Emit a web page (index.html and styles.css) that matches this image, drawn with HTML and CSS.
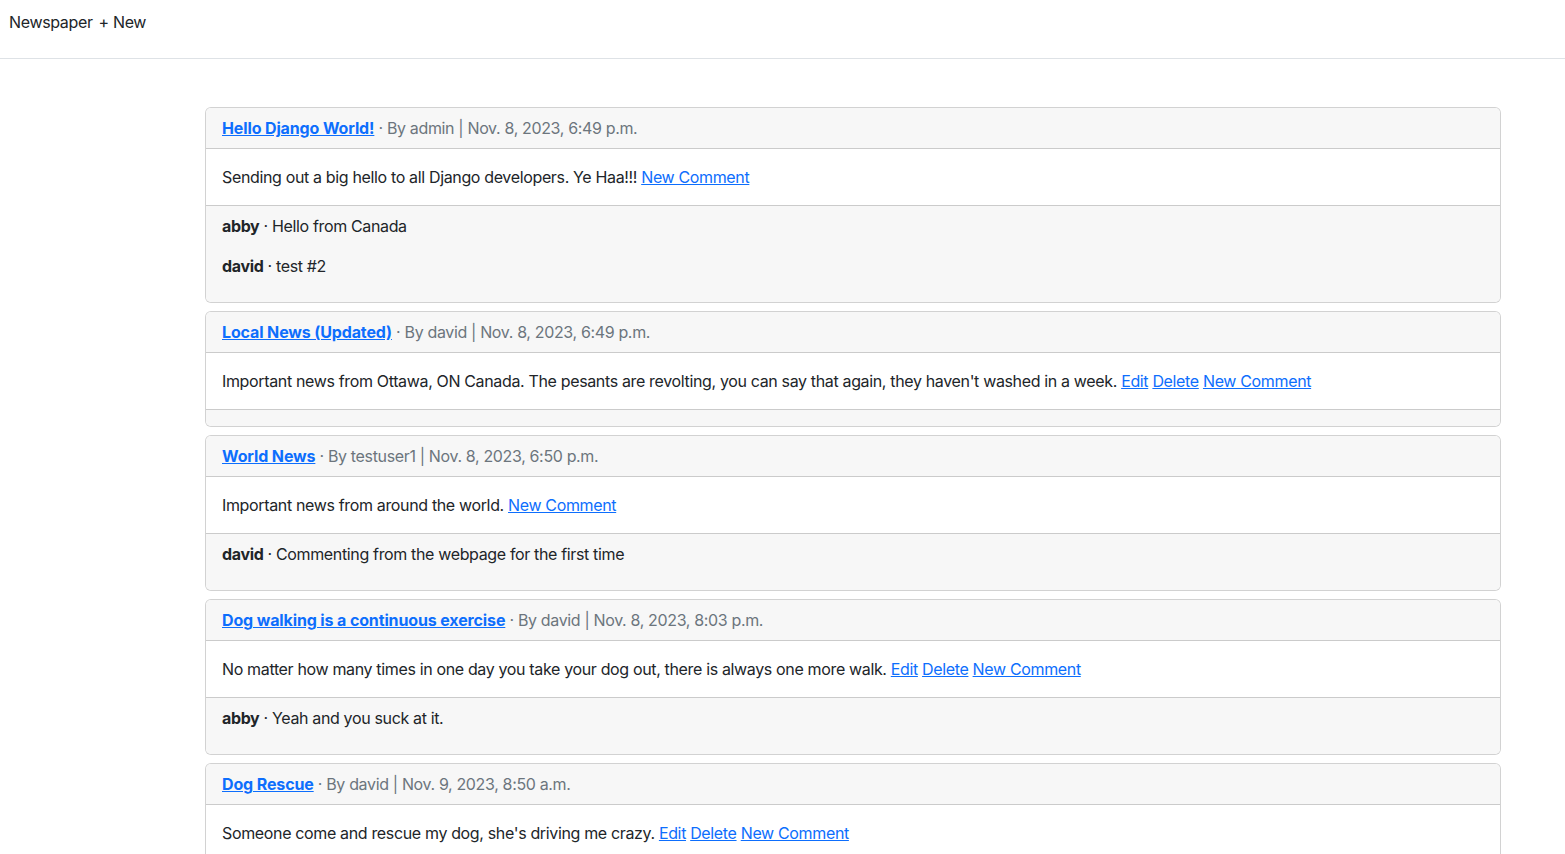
FILE: index.html
```html
<!DOCTYPE html>
<html lang="en">
<head>
<meta charset="utf-8">
<title>Newspaper</title>
<link rel="stylesheet" href="styles.css">
</head>
<body>
<nav class="topnav">
  <a class="brand" href="#">Newspaper</a>
  <a class="nav-link" href="#">+ New</a>
</nav>
<main class="main">
  <div class="card">
    <div class="card-header"><a class="title" href="#">Hello Django World!</a> <span class="meta">&middot; By admin | Nov. 8, 2023, 6:49 p.m.</span></div>
    <div class="card-body">Sending out a big hello to all Django developers. Ye Haa!!! <a href="#">New Comment</a></div>
    <div class="card-footer">
      <p><strong>abby</strong> &middot; Hello from Canada</p>
      <p><strong>david</strong> &middot; test #2</p>
    </div>
  </div>
  <div class="card">
    <div class="card-header"><a class="title" href="#">Local News (Updated)</a> <span class="meta">&middot; By david | Nov. 8, 2023, 6:49 p.m.</span></div>
    <div class="card-body">Important news from Ottawa, ON Canada. The pesants are revolting, you can say that again, they haven't washed in a week. <a href="#">Edit</a> <a href="#">Delete</a> <a href="#">New Comment</a></div>
    <div class="card-footer"></div>
  </div>
  <div class="card">
    <div class="card-header"><a class="title" href="#">World News</a> <span class="meta">&middot; By testuser1 | Nov. 8, 2023, 6:50 p.m.</span></div>
    <div class="card-body">Important news from around the world. <a href="#">New Comment</a></div>
    <div class="card-footer">
      <p><strong>david</strong> &middot; Commenting from the webpage for the first time</p>
    </div>
  </div>
  <div class="card">
    <div class="card-header"><a class="title" href="#">Dog walking is a continuous exercise</a> <span class="meta">&middot; By david | Nov. 8, 2023, 8:03 p.m.</span></div>
    <div class="card-body">No matter how many times in one day you take your dog out, there is always one more walk. <a href="#">Edit</a> <a href="#">Delete</a> <a href="#">New Comment</a></div>
    <div class="card-footer">
      <p><strong>abby</strong> &middot; Yeah and you suck at it.</p>
    </div>
  </div>
  <div class="card">
    <div class="card-header"><a class="title" href="#">Dog Rescue</a> <span class="meta">&middot; By david | Nov. 9, 2023, 8:50 a.m.</span></div>
    <div class="card-body">Someone come and rescue my dog, she's driving me crazy. <a href="#">Edit</a> <a href="#">Delete</a> <a href="#">New Comment</a></div>
    <div class="card-footer"></div>
  </div>
</main>
</body>
</html>
```
FILE: styles.css
```css
* { box-sizing: border-box; }
html, body { margin: 0; padding: 0; }
body {
  font-family: Inter, "Liberation Sans", sans-serif;
  font-size: 16px;
  line-height: 24px;
  letter-spacing: -0.35px;
  color: #212529;
  background: #fff;
}
a { color: #0d6efd; text-decoration: underline; }
.topnav {
  display: flex;
  gap: 6px;
  height: 59px;
  padding: 10px 9px 0;
  border-bottom: 1px solid #dee2e6;
}
.topnav a { color: #212529; text-decoration: none; }
.main {
  padding: 48px 64px 0 205px;
  display: flex;
  flex-direction: column;
  gap: 8px;
}
.card {
  border: 1px solid rgba(0,0,0,0.175);
  border-radius: 6px;
  overflow: hidden;
  background: #fff;
}
.card-header {
  padding: 8px 16px;
  background: #f7f7f7;
  border-bottom: 1px solid rgba(0,0,0,0.175);
}
.card-header .title { font-weight: 700; letter-spacing: -0.13px; }
.meta { color: #6c757d; }
.card-body { padding: 16px; }
.card-footer {
  padding: 8px 16px;
  background: #f7f7f7;
  border-top: 1px solid rgba(0,0,0,0.175);
}
.card-footer p { margin: 0 0 16px; }
```
